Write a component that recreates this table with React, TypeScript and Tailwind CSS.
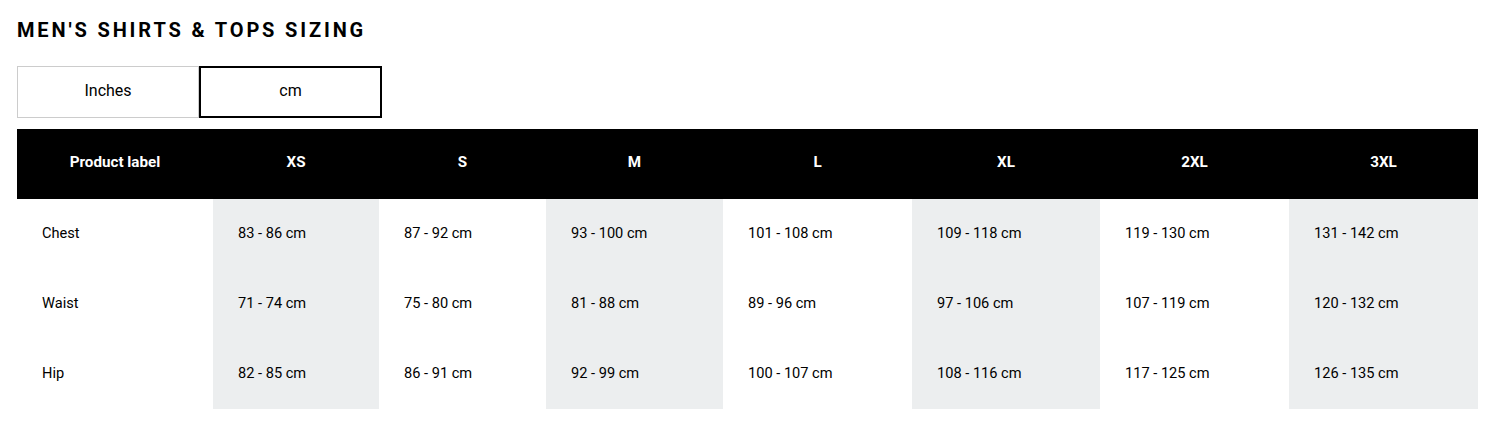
const sizes = ["XS", "S", "M", "L", "XL", "2XL", "3XL"];
const widths = ["w-[196px]", "w-[166px]", "w-[167px]", "w-[177px]", "w-[189px]", "w-[188px]", "w-[189px]", "w-[189px]"];

const rows = [
  { label: "Chest", values: ["83 - 86 cm", "87 - 92 cm", "93 - 100 cm", "101 - 108 cm", "109 - 118 cm", "119 - 130 cm", "131 - 142 cm"] },
  { label: "Waist", values: ["71 - 74 cm", "75 - 80 cm", "81 - 88 cm", "89 - 96 cm", "97 - 106 cm", "107 - 119 cm", "120 - 132 cm"] },
  { label: "Hip", values: ["82 - 85 cm", "86 - 91 cm", "92 - 99 cm", "100 - 107 cm", "108 - 116 cm", "117 - 125 cm", "126 - 135 cm"] },
];

export default function App() {
  return (
    <div className="min-h-screen bg-white px-[17px] pt-[18px] text-black" style={{ fontFamily: "Roboto, 'Liberation Sans', sans-serif" }}>
      <h1 className="text-[20px] font-bold uppercase leading-[24px] tracking-[2.85px]">Men's Shirts &amp; Tops Sizing</h1>

      <div className="mt-[24px] flex">
        <button className="h-[52px] w-[182px] border border-[#cccccc] pb-[3px] text-[16px]">Inches</button>
        <button className="h-[52px] w-[183px] border-2 border-black pb-[3px] text-[16px]">cm</button>
      </div>

      <table className="mt-[11px] w-[1461px] table-fixed border-collapse text-[14.6px]">
        <colgroup>
          {widths.map((w, i) => (
            <col key={i} className={w} />
          ))}
        </colgroup>
        <thead>
          <tr className="h-[70px] bg-black text-white">
            <th className="pb-[4px] text-center text-[15.2px] font-bold">Product label</th>
            {sizes.map((s) => (
              <th key={s} className="pb-[4px] text-center text-[15.2px] font-bold">{s}</th>
            ))}
          </tr>
        </thead>
        <tbody>
          {rows.map((r) => (
            <tr key={r.label} className="h-[70px]">
              <td className="pb-[1px] pl-[25px]">{r.label}</td>
              {r.values.map((v, i) => (
                <td key={i} className={i % 2 === 0 ? "bg-[#eceeef] pb-[1px] pl-[25px]" : "pb-[1px] pl-[25px]"}>{v}</td>
              ))}
            </tr>
          ))}
        </tbody>
      </table>
    </div>
  );
}
